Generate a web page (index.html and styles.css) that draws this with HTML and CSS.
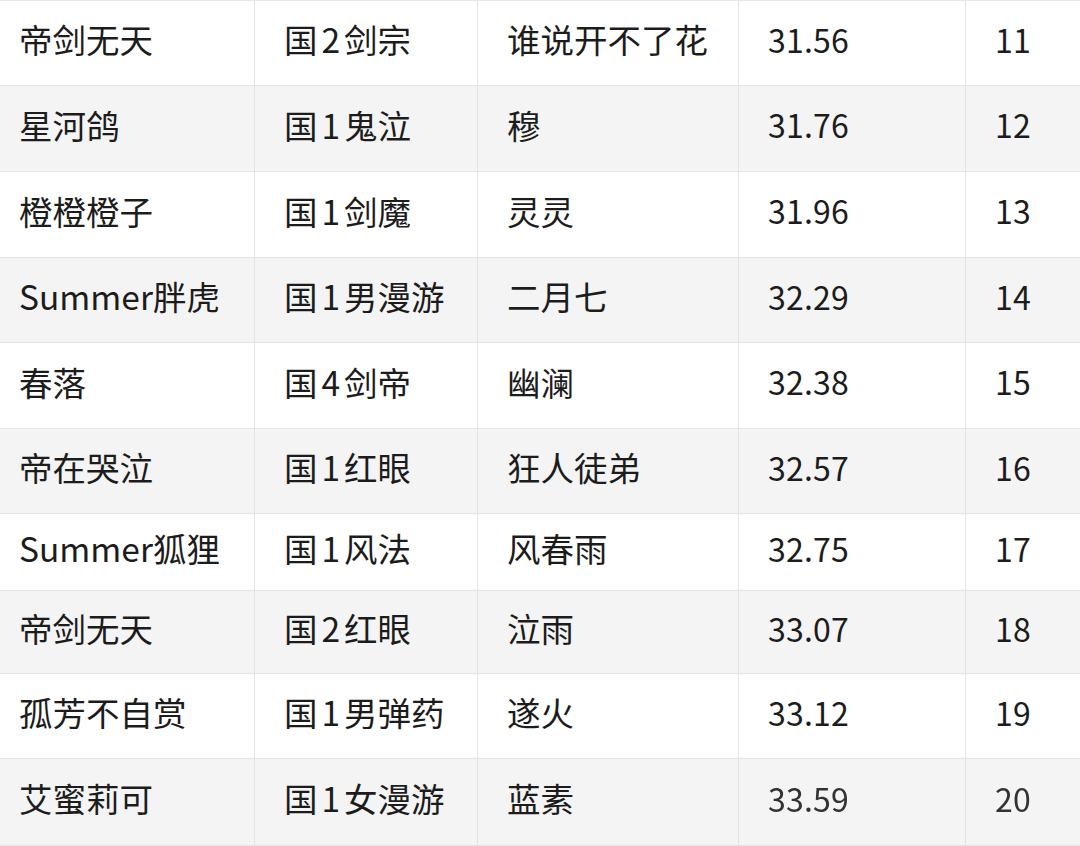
FILE: index.html
```html
<!DOCTYPE html>
<html lang="zh-CN">
<head>
<meta charset="utf-8">
<title>排行</title>
<link rel="stylesheet" href="styles.css">
</head>
<body>
<div class="table">
  <div class="row"><div class="cell">帝剑无天</div><div class="cell">国<span class="d">2</span>剑宗</div><div class="cell">谁说开不了花</div><div class="cell num">31.56</div><div class="cell num">11</div></div>
  <div class="row"><div class="cell">星河鸽</div><div class="cell">国<span class="d">1</span>鬼泣</div><div class="cell">穆</div><div class="cell num">31.76</div><div class="cell num">12</div></div>
  <div class="row"><div class="cell">橙橙橙子</div><div class="cell">国<span class="d">1</span>剑魔</div><div class="cell">灵灵</div><div class="cell num">31.96</div><div class="cell num">13</div></div>
  <div class="row"><div class="cell">Summer胖虎</div><div class="cell">国<span class="d">1</span>男漫游</div><div class="cell">二月七</div><div class="cell num">32.29</div><div class="cell num">14</div></div>
  <div class="row"><div class="cell">春落</div><div class="cell">国<span class="d">4</span>剑帝</div><div class="cell">幽澜</div><div class="cell num">32.38</div><div class="cell num">15</div></div>
  <div class="row"><div class="cell">帝在哭泣</div><div class="cell">国<span class="d">1</span>红眼</div><div class="cell">狂人徒弟</div><div class="cell num">32.57</div><div class="cell num">16</div></div>
  <div class="row"><div class="cell">Summer狐狸</div><div class="cell">国<span class="d">1</span>风法</div><div class="cell">风春雨</div><div class="cell num">32.75</div><div class="cell num">17</div></div>
  <div class="row"><div class="cell">帝剑无天</div><div class="cell">国<span class="d">2</span>红眼</div><div class="cell">泣雨</div><div class="cell num">33.07</div><div class="cell num">18</div></div>
  <div class="row"><div class="cell">孤芳不自赏</div><div class="cell">国<span class="d">1</span>男弹药</div><div class="cell">遂火</div><div class="cell num">33.12</div><div class="cell num">19</div></div>
  <div class="row"><div class="cell">艾蜜莉可</div><div class="cell">国<span class="d">1</span>女漫游</div><div class="cell">蓝素</div><div class="cell num blur">33.59</div><div class="cell num blur">20</div></div>
</div>
</body>
</html>
```
FILE: styles.css
```css
html, body {
  margin: 0;
  padding: 0;
  background: #ffffff;
}
body {
  width: 1080px;
  height: 846px;
  overflow: hidden;
  font-family: "Noto Sans CJK SC", "Noto Sans", sans-serif;
  font-size: 33.5px;
  color: #1c1c1c;
}
.table {
  border-top: 1px solid #e6e6e6;
  display: flex;
  flex-direction: column;
}
.row {
  display: grid;
  grid-template-columns: 254px 223px 261px 227px 115px;
  height: 85px;
  box-sizing: border-box;
  border-bottom: 1px solid #e4e4e4;
  background: #ffffff;
}
.row:nth-child(even) {
  background: #f4f4f4;
}
.row:nth-child(2),
.row:nth-child(3),
.row:nth-child(5) {
  height: 86px;
}
.row:nth-child(7) {
  height: 77px;
}
.row:nth-child(8) {
  height: 83px;
}
.row:nth-child(10) {
  height: 87px;
}
.cell {
  display: flex;
  align-items: center;
  padding-left: 29px;
  padding-bottom: 9px;
  box-sizing: border-box;
  border-left: 1px solid #e4e4e4;
  white-space: nowrap;
}
.cell:first-child {
  border-left: none;
  padding-left: 19px;
}
.d {
  margin: 0 4px;
}
.num {
  font-size: 32px;
  letter-spacing: 0.2px;
}
.blur {
  color: #333333;
  filter: blur(0.6px);
}
```
